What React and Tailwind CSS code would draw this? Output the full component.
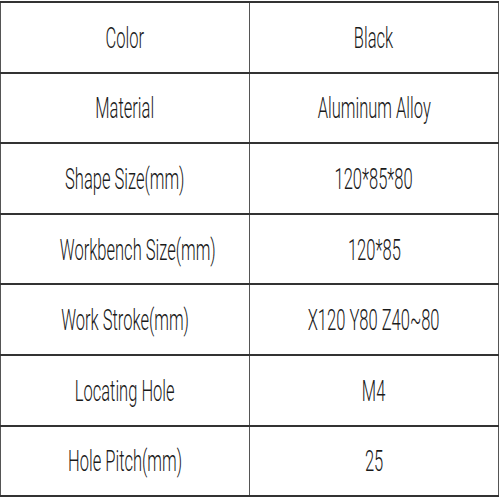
const rows = [
  ['Color', 'Black'],
  ['Material', 'Aluminum Alloy'],
  ['Shape Size(mm)', '120*85*80'],
  ['Workbench Size(mm)', '120*85'],
  ['Work Stroke(mm)', 'X120 Y80 Z40~80'],
  ['Locating Hole', 'M4'],
  ['Hole Pitch(mm)', '25'],
];

const Cell = ({ children }) => (
  <td className="border-x-[1.5px] border-[#555] text-center align-middle p-0">
    <span className="inline-block whitespace-nowrap scale-x-[0.57] text-[29px] font-light leading-none text-[#1a1a1a] translate-y-[2px]">
      {children}
    </span>
  </td>
);

export default function App() {
  return (
    <div className="w-[500px] h-[500px] bg-white pt-px" style={{ fontFamily: 'Roboto, "Liberation Sans", sans-serif' }}>
      <table className="w-[499px] border-collapse table-fixed">
        <tbody>
          {rows.map(([k, v]) => (
            <tr key={k} className="h-[70.6px] border-y-2 border-[#333]">
              <Cell>{k}</Cell>
              <Cell>{v}</Cell>
            </tr>
          ))}
        </tbody>
      </table>
    </div>
  );
}
